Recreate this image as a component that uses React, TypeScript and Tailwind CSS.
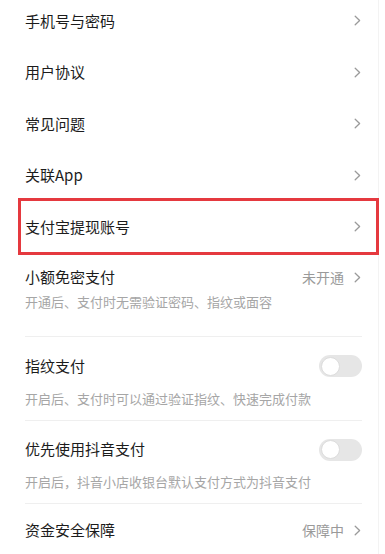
const font = "font-['Noto_Sans_CJK_SC','Noto_Sans',sans-serif]";

function Chevron() {
  return (
    <svg width="7" height="11" viewBox="0 0 7 11" fill="none" className="shrink-0">
      <path d="M1.2 1.2 L5.6 5.5 L1.2 9.8" stroke="#9a9a9a" strokeWidth="1.3" strokeLinecap="round" strokeLinejoin="round" />
    </svg>
  );
}

function Toggle() {
  return (
    <div className="w-[43px] h-[22px] rounded-full bg-[#e6e6e6] p-[1.5px] flex items-center">
      <div className="w-[19px] h-[19px] rounded-full bg-white border border-[#dcdcdc]" />
    </div>
  );
}

function NavRow({ title, boxed }: { title: string; boxed?: boolean }) {
  return (
    <div className="relative h-[51.5px] flex items-center justify-between pl-[25px] pr-[17px]">
      <span className="text-[15px] leading-[22px] text-[#1c1c1c]">{title}</span>
      <Chevron />
      {boxed && (
        <div className="absolute top-[-3px] bottom-[-2px] left-[18px] right-[-1px] border-[3px] border-[#e5393f]" />
      )}
    </div>
  );
}

export default function App() {
  return (
    <div className={`w-[385px] h-[554px] overflow-hidden bg-white flex ${font}`}>
      <div className="w-[378px] shrink-0 -mt-[5px]">
        <NavRow title="手机号与密码" />
        <NavRow title="用户协议" />
        <NavRow title="常见问题" />
        <NavRow title="关联App" />
        <NavRow title="支付宝提现账号" boxed />

        <div className="ml-[25px] mr-[16px] border-b border-[#efefef] pt-[12.5px] pb-[25px]">
          <div className="h-[24px] flex items-center justify-between">
            <span className="text-[15px] text-[#1c1c1c]">小额免密支付</span>
            <div className="flex items-center gap-[10px] pr-px">
              <span className="text-[14px] text-[#9a9a9a]">未开通</span>
              <Chevron />
            </div>
          </div>
          <div className="mt-[4px] text-[13px] leading-[18px] text-[#a6a6a6]">开通后、支付时无需验证密码、指纹或面容</div>
        </div>

        <div className="ml-[25px] mr-[16px] border-b border-[#efefef] pt-[17px] pb-[12px]">
          <div className="h-[24px] flex items-center justify-between">
            <span className="text-[15px] text-[#1c1c1c]">指纹支付</span>
            <Toggle />
          </div>
          <div className="mt-[11.5px] text-[13px] leading-[18px] text-[#a6a6a6]">开启后、支付时可以通过验证指纹、快速完成付款</div>
        </div>

        <div className="ml-[25px] mr-[16px] border-b border-[#efefef] pt-[17px] pb-[12px]">
          <div className="h-[24px] flex items-center justify-between">
            <span className="text-[15px] text-[#1c1c1c]">优先使用抖音支付</span>
            <Toggle />
          </div>
          <div className="mt-[11.5px] text-[13px] leading-[18px] text-[#a6a6a6]">开启后，抖音小店收银台默认支付方式为抖音支付</div>
        </div>

        <div className="h-[52px] flex items-center justify-between pl-[25px] pr-[17px]">
          <span className="text-[15px] text-[#1c1c1c]">资金安全保障</span>
          <div className="flex items-center gap-[10px]">
            <span className="text-[14px] text-[#9a9a9a]">保障中</span>
            <Chevron />
          </div>
        </div>
      </div>
      <div className="w-px shrink-0 bg-[#f3f3f3]" />
      <div className="flex-1" />
    </div>
  );
}
